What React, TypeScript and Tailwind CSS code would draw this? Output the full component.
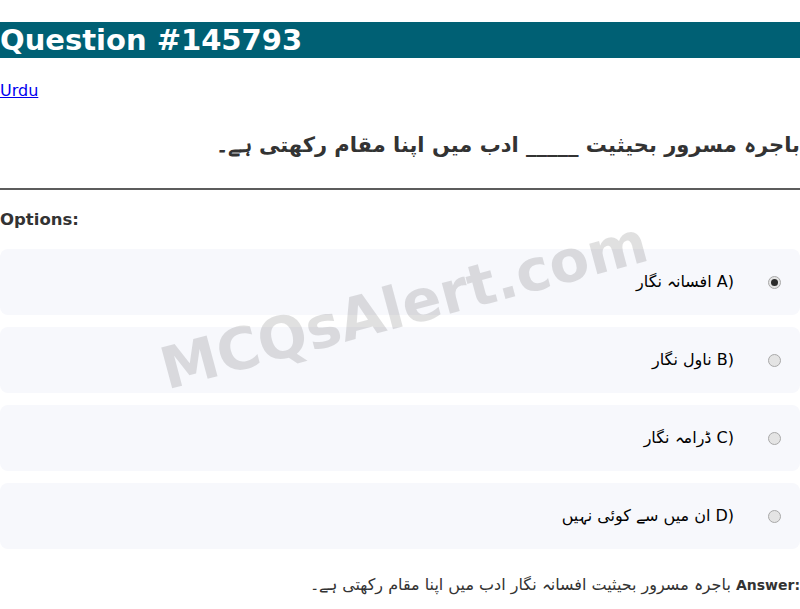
import React from 'react';

const options = [
  { key: 'A', text: 'افسانہ نگار', checked: true },
  { key: 'B', text: 'ناول نگار', checked: false },
  { key: 'C', text: 'ڈرامہ نگار', checked: false },
  { key: 'D', text: 'ان میں سے کوئی نہیں', checked: false },
];

function Radio({ checked }: { checked: boolean }) {
  return (
    <span className="flex h-[13px] w-[13px] shrink-0 items-center justify-center rounded-full border border-[#a9a9a9] bg-[#e4e4e4]">
      {checked && <span className="h-[7px] w-[7px] rounded-full bg-[#2b2b2b]" />}
    </span>
  );
}

export default function App() {
  return (
    <div className="relative min-h-[609px] overflow-hidden bg-white font-['DejaVu_Sans',sans-serif] text-[#333]">
      <h1 className="mt-[22px] mb-[21px] bg-[#006074] text-[29px] font-bold leading-[36px] text-white">
        Question #145793
      </h1>

      <a href="#" className="text-base leading-[19px] text-[#0000ee] underline">
        Urdu
      </a>

      {/* Question */}
      <h2 dir="rtl" className="mt-[28px] text-[21px] font-bold leading-[28px] text-[#333]">
        باجرہ مسرور بحیثیت _____ ادب میں اپنا مقام رکھتی ہے۔
      </h2>

      <hr className="mt-[29px] border-t-2 border-[#5c5c5c]" />

      <div className="mt-[19px] text-[16.5px] font-bold leading-[21px] text-[#333]">Options:</div>

      <div className="mt-[19px] flex flex-col gap-3">
        {options.map((o) => (
          <label
            key={o.key}
            dir="rtl"
            className="flex h-[66px] items-center gap-[34px] rounded-lg bg-[#f7f8fc] pr-[19px] text-base text-black"
          >
            <Radio checked={o.checked} />
            <span>
              <span dir="ltr">{o.key})</span> {o.text}
            </span>
          </label>
        ))}
      </div>

      <p dir="rtl" className="mt-[26px] text-base leading-[19px] text-[#333]">
        <strong dir="ltr" className="text-[14px]">
          Answer:
        </strong>{' '}
        باجرہ مسرور بحیثیت افسانہ نگار ادب میں اپنا مقام رکھتی ہے۔
      </p>

      {/* Watermark */}
      <div className="pointer-events-none absolute left-[404px] top-[306px] -translate-x-1/2 -translate-y-1/2 -rotate-[15deg] whitespace-nowrap text-[58px] font-bold text-[rgba(0,0,0,0.12)]">
        MCQsAlert.com
      </div>
    </div>
  );
}
